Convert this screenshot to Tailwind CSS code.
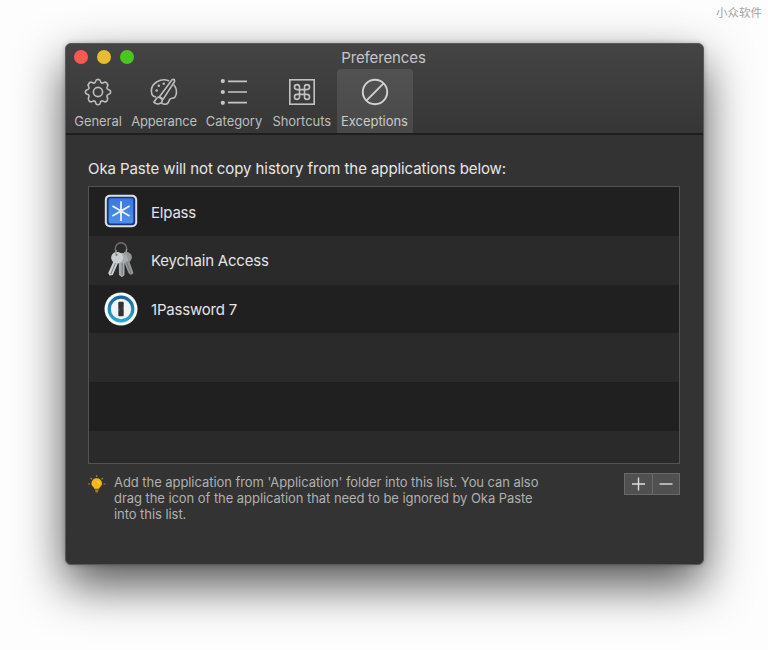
<!DOCTYPE html>
<html lang="en">
<head>
<meta charset="utf-8">
<title>Preferences</title>
<script src="https://cdn.jsdelivr.net/npm/@tailwindcss/browser@4"></script>
</head>
<body class="relative h-[650px] w-[768px] overflow-hidden bg-[#fdfdfd] pl-[65px] pt-[43px] font-['Inter','Noto_Sans_CJK_SC',sans-serif]">
<div class="absolute right-[6px] top-[4px] font-['Noto_Sans_CJK_SC',sans-serif] text-[11.5px] leading-[17px] text-[#a4a4a4]">小众软件</div>

<main class="flex h-[522px] w-[639px] flex-col overflow-hidden rounded-[6px] border border-[#5a5a5a] bg-[#333333] shadow-[0_20px_48px_rgba(0,0,0,0.68),0_0_5px_rgba(0,0,0,0.25)]">
  <header class="flex h-[91px] flex-none flex-col border-b-2 border-[#1e1e1e] bg-linear-to-b from-[#444444] to-[#363636]">
    <div class="grid h-[25px] flex-none grid-cols-3 items-center">
      <div class="flex gap-[9px] pl-[8px]">
        <span class="size-[14px] rounded-full bg-[#fc5753]"></span>
        <span class="size-[14px] rounded-full bg-[#e5bd2e]"></span>
        <span class="size-[14px] rounded-full bg-[#4bc521]"></span>
      </div>
      <h1 class="pr-[2px] pt-[3px] text-center text-[15px] leading-[20px] tracking-[-0.12px] text-[#c6c6c6]">Preferences</h1>
    </div>
    <nav class="flex h-[64px] pl-[3px] text-[13px] leading-[16px] tracking-[-0.05px] text-[#bdbdbd]">
      <div class="flex w-[58px] flex-col items-center pt-[9px]">
        <svg class="size-[28px]" viewBox="0 0 28 28" fill="none" stroke="#bdbdbd" stroke-width="1.6" stroke-linejoin="round"><path d="M11.7 3.2C12.2 .7 15.8 .7 16.3 3.2C16.7 5 18.1 5.6 19.6 4.6C21.9 3.2 24.8 6.1 23.4 8.4C22.4 9.9 23 11.3 24.8 11.7C27.3 12.2 27.3 15.8 24.8 16.3C23 16.7 22.4 18.1 23.4 19.6C24.8 21.9 21.9 24.8 19.6 23.4C18.1 22.4 16.7 23 16.3 24.8C15.8 27.3 12.2 27.3 11.7 24.8C11.3 23 9.9 22.4 8.4 23.4C6.1 24.8 3.2 21.9 4.6 19.6C5.6 18.1 5 16.7 3.2 16.3C.7 15.8 .7 12.2 3.2 11.7C5 11.3 5.6 9.9 4.6 8.4C3.2 6.1 6.1 3.2 8.4 4.6C9.9 5.6 11.3 5 11.7 3.2Z"/><circle cx="14" cy="14" r="4.6"/></svg>
        <span class="mt-[7px] whitespace-nowrap">General</span>
      </div>
      <div class="flex w-[74px] flex-col items-center pt-[9px]">
        <svg class="size-[28px]" viewBox="0 0 28 28" fill="none" stroke="#bdbdbd" stroke-width="1.6" stroke-linecap="round" stroke-linejoin="round"><path d="M18.6 2.7C11-.2 1 5 1.4 13.2C1.5 16 2.9 18.4 5.3 18.8M24.2 7.2C27.2 11 27 16.5 24.8 19.3C23.4 21 21 19.6 19.8 21.2C18.4 23.2 19 26.2 15.5 26.3C14 26.4 12.8 26 11.8 25.4"/><path d="M22.1 1.7C23.9.7 25.1 2 24.4 3.7L13.2 21.1L9.6 18.6L22.1 1.7ZM9 19.2C6.2 18.7 5.8 22.4 3.8 24.1C6.8 27.2 12.4 26.3 12.4 21.6Z"/><g fill="#bdbdbd" stroke="none"><circle cx="6.7" cy="12.5" r="1.3"/><circle cx="8.8" cy="7.8" r="1.3"/><circle cx="13.7" cy="5.7" r="1.2"/></g></svg>
        <span class="mt-[7px] whitespace-nowrap tracking-[-0.2px]">Apperance</span>
      </div>
      <div class="flex w-[66px] flex-col items-center pt-[9px]">
        <svg class="size-[28px]" viewBox="0 0 28 28" stroke="#c6c6c6" stroke-width="1.7" fill="#c6c6c6"><path d="M8 3.4H27M8 14H27M8 24.6H27"/><g stroke="none"><circle cx="2.8" cy="3.1" r="2.1"/><circle cx="2.8" cy="14" r="2.1"/><circle cx="2.8" cy="24.8" r="2.1"/></g></svg>
        <span class="mt-[7px] whitespace-nowrap">Category</span>
      </div>
      <div class="flex w-[69.5px] flex-col items-center pt-[9px]">
        <svg class="size-[28px]" viewBox="0 0 28 28" fill="none" stroke="#c2c2c2" stroke-width="1.6"><rect x="1.8" y="1.8" width="24.4" height="24.4"/><path d="M11.5 9.1A2.5 2.5 0 1 0 9 11.6H19A2.5 2.5 0 1 0 16.5 9.1V18.9A2.5 2.5 0 1 0 19 16.4H9A2.5 2.5 0 1 0 11.5 18.9Z"/></svg>
        <span class="mt-[7px] whitespace-nowrap">Shortcuts</span>
      </div>
      <div class="flex w-[76px] flex-col items-center rounded-t-[4px] bg-linear-to-b from-[#525252] to-[#484848] pt-[9px] text-[#cacaca]">
        <svg class="size-[28px]" viewBox="0 0 28 28" fill="none" stroke="#d2d2d2" stroke-width="1.9"><circle cx="14" cy="14" r="12.2"/><path d="M22.6 5.4L5.4 22.6"/></svg>
        <span class="mt-[7px] whitespace-nowrap">Exceptions</span>
      </div>
    </nav>
  </header>

  <section class="flex flex-1 flex-col px-[22px] pt-[24px]">
    <p class="h-[27px] flex-none whitespace-nowrap text-[15px] leading-[20px] tracking-[-0.08px] text-[#e6e6e6]">Oka Paste will not copy history from the applications below:</p>
    <ul class="h-[278px] w-[592px] flex-none overflow-hidden border border-[#535353] bg-[#2a2a2a] text-[15px] tracking-[-0.2px] text-[#e4e4e4]">
      <li class="flex h-[48.75px] items-center gap-[13px] bg-[#202020] pl-[15px]">
        <svg class="size-[34px]" viewBox="0 0 34 34"><defs><linearGradient id="blue" x2="0" y2="1"><stop stop-color="#3a79df"/><stop offset="1" stop-color="#4a91ed"/></linearGradient></defs><rect x=".8" y=".8" width="32.4" height="32.4" rx="5" fill="#dcdfe8"/><rect x="2.8" y="2.8" width="28.4" height="28.4" rx="3.5" fill="#17377c"/><rect x="4.7" y="4.2" width="24.6" height="25.2" rx="2.2" fill="url(#blue)"/><path d="M17 7.2V27M8.4 12L25.6 22M25.6 12L8.4 22" stroke="#edf4ff" stroke-width="1.8"/></svg>
        <span class="pt-[3px]">Elpass</span>
      </li>
      <li class="flex h-[48.75px] items-center gap-[13px] bg-[#2a2a2a] pl-[15px]">
        <svg class="h-[36px] w-[34px]" viewBox="0 0 34 36"><ellipse cx="17" cy="7" rx="5.7" ry="6.2" fill="none" stroke="#6e6e6e" stroke-width="1.5"/><path d="M20 10C25 9 30 13 27 18L25.5 20L29.5 31L27 33L24.5 31L20 20Z" fill="#929698"/><path d="M14 11L22 11L24.5 18L20.5 21.5L20.5 33L18 35.3L15 33L14.8 20Z" fill="#a7abad"/><path d="M9.5 11C14 8.5 20.5 11.5 19 17C18.2 19.5 16 20.9 13.8 21.5L8.8 33L5.4 33.5L4.2 31L9.2 20C6.3 17 6.6 13.2 9.5 11Z" fill="#c9ced0"/><path d="M11.5 21L6.8 32M18.2 21V33M22.5 20L26.8 31" stroke="#6f7375" stroke-width=".9"/><path d="M12 12V8M20 13C22 12 22.7 10 22.5 7" fill="none" stroke="#999" stroke-width="1.3"/><circle cx="12.5" cy="12.8" r="1.1" fill="#777"/></svg>
        <span class="pt-[3px]">Keychain Access</span>
      </li>
      <li class="flex h-[48.75px] items-center gap-[13px] bg-[#202020] pl-[15px]">
        <svg class="size-[34px]" viewBox="0 0 34 34"><defs><linearGradient id="ring" x2="0" y2="1"><stop stop-color="#16699b"/><stop offset="1" stop-color="#28a5d3"/></linearGradient></defs><circle cx="17" cy="17" r="16.5" fill="#f6fafb"/><circle cx="17" cy="17" r="11.8" fill="#f2f3f3" stroke="url(#ring)" stroke-width="3.2"/><rect x="14.3" y="9.8" width="5.4" height="14.4" rx="1" fill="#303234"/><path d="M14.3 15.5l1 1v2.5l-1 1zM19.7 14l-1 1v2.5l1 1z" fill="#777"/></svg>
        <span class="pt-[3px]">1Password 7</span>
      </li>
      <li class="h-[48.75px] bg-[#2a2a2a]"></li>
      <li class="h-[48.75px] bg-[#202020]"></li>
      <li class="h-[48.75px] bg-[#2a2a2a]"></li>
    </ul>
    <footer class="flex pt-[9px]">
      <svg class="mt-[2px] size-[18px] flex-none" viewBox="0 0 18 18"><path d="M8.7 .3V2M2.5 3L4 4.4M15 3L13.5 4.4M.2 9H2M15.5 9H17.3" stroke="#b38a36" stroke-width="1.1"/><path d="M8.7 3.2A5.2 5.2 0 0 1 14 8.4C14 11 11.2 12 11.2 13.8H6.3C6.3 12 3.4 11 3.4 8.4A5.2 5.2 0 0 1 8.7 3.2Z" fill="#fdb515"/><path d="M6.7 14.2H10.8L9.8 17.6H7.7Z" fill="#9a7831"/><path d="M9 6.2A2.5 2.5 0 0 1 11 8.5" fill="none" stroke="#ffe38a"/></svg>
      <p class="ml-[8px] w-[440px] whitespace-nowrap pt-[1px] text-[13px] leading-[16.2px] tracking-[-0.06px] text-[#b0b0b0]">Add the application from 'Application' folder into this list. You can also<br>drag the icon of the application that need to be ignored by Oka Paste<br>into this list.</p>
      <div class="ml-auto mr-[1px] flex h-[22px] w-[56px] border border-[#686868] bg-[#505050]">
        <span class="flex w-[28px] items-center justify-center border-r border-[#6c6c6c]"><svg class="size-[14px]" viewBox="0 0 14 14" stroke="#dedede" stroke-width="1.4"><path d="M6.5 .5V13.5M0 7H13"/></svg></span>
        <span class="flex flex-1 items-center justify-center"><svg class="size-[14px]" viewBox="0 0 14 14" stroke="#dedede" stroke-width="1.4"><path d="M.5 7H13.5"/></svg></span>
      </div>
    </footer>
  </section>
</main>
</body>
</html>
